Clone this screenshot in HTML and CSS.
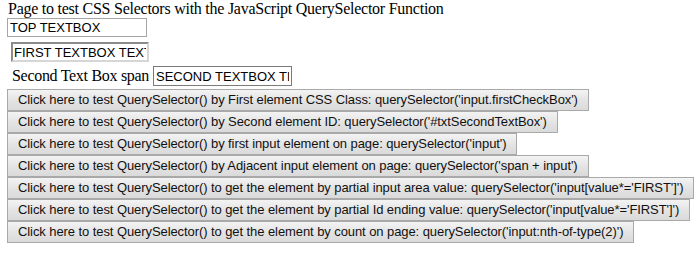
FILE: index.html
```html
<!DOCTYPE html>
<html>
<head>
<meta charset="utf-8">
<title>QuerySelector test</title>
<link rel="stylesheet" href="styles.css">
</head>
<body>
<div class="page">
  <div class="title">Page to test CSS Selectors with the JavaScript QuerySelector Function</div>
  <input class="box top-box" type="text" value="TOP TEXTBOX">
  <input class="box first-box firstCheckBox" type="text" value="FIRST TEXTBOX TEXT">
  <div class="row">
    <span class="label">Second Text Box span</span>
    <input class="box second-box" id="txtSecondTextBox" type="text" value="SECOND TEXTBOX TEXT">
  </div>
  <div class="buttons">
    <button class="btn">Click here to test QuerySelector() by First element CSS Class: querySelector('input.firstCheckBox')</button>
    <button class="btn">Click here to test QuerySelector() by Second element ID: querySelector('#txtSecondTextBox')</button>
    <button class="btn">Click here to test QuerySelector() by first input element on page: querySelector('input')</button>
    <button class="btn">Click here to test QuerySelector() by Adjacent input element on page: querySelector('span + input')</button>
    <button class="btn">Click here to test QuerySelector() to get the element by partial input area value: querySelector('input[value*='FIRST']')</button>
    <button class="btn">Click here to test QuerySelector() to get the element by partial Id ending value: querySelector('input[value*='FIRST']')</button>
    <button class="btn">Click here to test QuerySelector() to get the element by count on page: querySelector('input:nth-of-type(2)')</button>
  </div>
</div>
</body>
</html>
```
FILE: styles.css
```css
html, body {
  margin: 0;
  padding: 0;
  background: #ffffff;
}
.page {
  display: flex;
  flex-direction: column;
  align-items: flex-start;
  padding: 0 0 0 7px;
  font-family: "Liberation Serif", "Times New Roman", serif;
  color: #000;
}
.title {
  font-size: 16px;
  line-height: 18px;
  margin-left: 1px;
  letter-spacing: -0.25px;
  white-space: nowrap;
}
.box {
  box-sizing: border-box;
  font-family: "Liberation Sans", Arial, sans-serif;
  font-size: 13px;
  color: #000;
  background: #fff;
  margin: 0;
  padding: 0 2px;
  outline: none;
}
.top-box {
  width: 140px;
  height: 19px;
  border: 1px solid #a6a6a6;
}
.first-box {
  margin-top: 5px;
  margin-left: 4px;
  width: 138px;
  height: 20px;
  border: 2px solid;
  border-color: #8c8c8c #d6d6d6 #d6d6d6 #8c8c8c;
  padding: 0 1px;
}
.row {
  display: flex;
  align-items: center;
  margin-top: 4px;
  margin-left: 5px;
  gap: 4px;
}
.label {
  font-size: 16px;
  line-height: 18px;
  letter-spacing: -0.3px;
  white-space: nowrap;
}
.second-box {
  width: 139px;
  height: 20px;
  border: 1px solid #7a7a7a;
}
.buttons {
  display: flex;
  flex-direction: column;
  align-items: flex-start;
  margin-top: 3px;
}
.btn {
  box-sizing: border-box;
  height: 22px;
  margin: 0;
  padding: 0 10px 0 10px;
  font-family: "Liberation Sans", Arial, sans-serif;
  font-size: 13px;
  line-height: 20px;
  letter-spacing: -0.08px;
  color: #111;
  white-space: nowrap;
  border: 1px solid #a9a9a9;
  border-radius: 0;
  background: linear-gradient(#f3f3f3, #e4e4e4 50%, #dadada);
}
```
